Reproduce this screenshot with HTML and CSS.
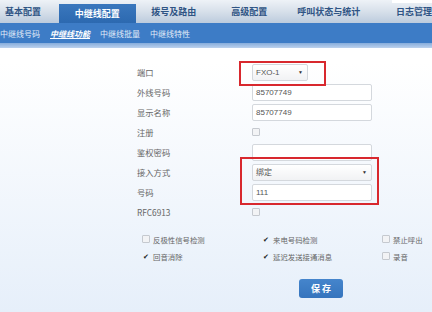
FILE: index.html
```html
<!DOCTYPE html>
<html lang="zh-CN">
<head>
    <meta charset="UTF-8">
    <title>中继线配置</title>
    <link rel="stylesheet" href="styles.css">
</head>
<body>
    <div class="tabs">
        <div class="tab tab-1">基本配置</div>
        <div class="tab tab-2 active">中继线配置</div>
        <div class="tab tab-3">拨号及路由</div>
        <div class="tab tab-4">高级配置</div>
        <div class="tab tab-5">呼叫状态与统计</div>
        <div class="tab tab-6">日志管理</div>
        <div class="top-gap"></div>
    </div>
    <div class="subnav">
        <span>中继线号码</span>
        <span class="current">中继线功能</span>
        <span>中继线批量</span>
        <span>中继线特性</span>
    </div>
    <div class="strip"></div>

    <div class="content">
        <div class="form">
            <div class="row"><label>端口</label><div class="select small">FXO-1<i>▼</i></div></div>
            <div class="row"><label>外线号码</label><div class="input">85707749</div></div>
            <div class="row"><label>显示名称</label><div class="input">85707749</div></div>
            <div class="row"><label>注册</label><span class="box"></span></div>
            <div class="row"><label>鉴权密码</label><div class="input"></div></div>
            <div class="row"><label>接入方式</label><div class="select">绑定<i>▼</i></div></div>
            <div class="row"><label>号码</label><div class="input">111</div></div>
            <div class="row"><label>RFC6913</label><span class="box"></span></div>

            <div class="mark mark-1"></div>
            <div class="mark mark-2"></div>
        </div>

        <div class="options">
            <div class="opt"><span class="box"></span>反极性信号检测</div>
            <div class="opt"><span class="box on">✔</span>来电号码检测</div>
            <div class="opt"><span class="box"></span>禁止呼出</div>
            <div class="opt"><span class="box on">✔</span>回音消除</div>
            <div class="opt"><span class="box on">✔</span>延迟发送接通消息</div>
            <div class="opt"><span class="box"></span>录音</div>
        </div>

        <div class="actions">
            <button class="save">保 存</button>
        </div>
    </div>
</body>
</html>
```

FILE: styles.css
```css
body {
    margin: 0;
    width: 432px;
    height: 312px;
    overflow: hidden;
    font-family: "Noto Sans CJK SC", "Liberation Sans", sans-serif;
    background: linear-gradient(#ffffff 20%, #e6effa 100%);
}
.tabs {
    display: flex;
    height: 23px;
    background: linear-gradient(#eef2f7, #d7e0ea 50%, #bccbdd);
    position: relative;
}
.tab {
    font-size: 9px;
    font-weight: bold;
    color: #2f5484;
    line-height: 23px;
    text-align: center;
    white-space: nowrap;
}
.tab-1 { width: 60px; text-align: left; padding-left: 5px; box-sizing: border-box; }
.tab-2 { width: 78px; }
.tab-3 { width: 78px; }
.tab-4 { width: 76px; }
.tab-5 { width: 86px; }
.tab-6 { flex: 1; text-align: left; padding-left: 25px; }
.tab.active {
    color: #fff;
    background: linear-gradient(#3a77bd, #2c69b0);
    margin-top: 4px;
    line-height: 19px;
}
.top-gap {
    position: absolute;
    right: 0;
    top: 0;
    width: 40px;
    height: 3px;
    background: #fff;
}
.subnav {
    height: 20px;
    background: #3d7cc6;
    display: flex;
    align-items: center;
    gap: 10px;
    font-size: 8px;
    color: #e3ecf8;
}
.subnav .current {
    color: #fff;
    font-weight: bold;
    font-style: italic;
    text-decoration: underline;
}
.strip {
    height: 5px;
    background: linear-gradient(#86acdb, #bcd2ee);
}
.content {
    padding-top: 14px;
}
.form {
    position: relative;
}
.row {
    display: flex;
    align-items: center;
    height: 20px;
}
.row label {
    width: 115px;
    padding-left: 137px;
    font-size: 8.3px;
    color: #666;
}
.input, .select {
    width: 120px;
    height: 17px;
    box-sizing: border-box;
    border: 1px solid #d4d8dd;
    border-radius: 2px;
    background: #fff;
    font-size: 8px;
    color: #555;
    line-height: 15px;
    padding-left: 3px;
    font-family: "Liberation Sans", "Noto Sans CJK SC", sans-serif;
}
.select {
    display: flex;
    justify-content: space-between;
    background: linear-gradient(#ffffff, #f1f2f4);
}
.select.small {
    width: 56px;
}
.select i {
    font-style: normal;
    font-size: 5px;
    color: #333;
    padding-right: 4px;
}
.box {
    display: inline-flex;
    align-items: center;
    justify-content: center;
    width: 6px;
    height: 6px;
    border: 1px solid #c5c9cf;
    border-radius: 1px;
    background: #f2f3f5;
    font-size: 7px;
    color: #222;
    line-height: 1;
}
.box.on {
    border-color: transparent;
    background: none;
}
.mark {
    position: absolute;
    border: 2px solid #d8282e;
    box-sizing: border-box;
}
.mark-1 {
    left: 239px;
    top: -1px;
    width: 87px;
    height: 25px;
}
.mark-2 {
    left: 240px;
    top: 95px;
    width: 139px;
    height: 48px;
}
.options {
    display: grid;
    grid-template-columns: 120px 120px 49px;
    padding-left: 142px;
    margin-top: 11px;
    row-gap: 5px;
}
.opt {
    display: flex;
    align-items: center;
    gap: 3px;
    font-size: 7.4px;
    color: #666;
    height: 12px;
    white-space: nowrap;
}
.actions {
    padding-left: 299px;
    margin-top: 11px;
}
.save {
    width: 44px;
    height: 19px;
    border: none;
    border-radius: 3px;
    background: linear-gradient(#4585cc, #3574bd);
    color: #fff;
    font-size: 9px;
    font-weight: bold;
    font-family: "Noto Sans CJK SC", sans-serif;
    padding: 0;
}
```
